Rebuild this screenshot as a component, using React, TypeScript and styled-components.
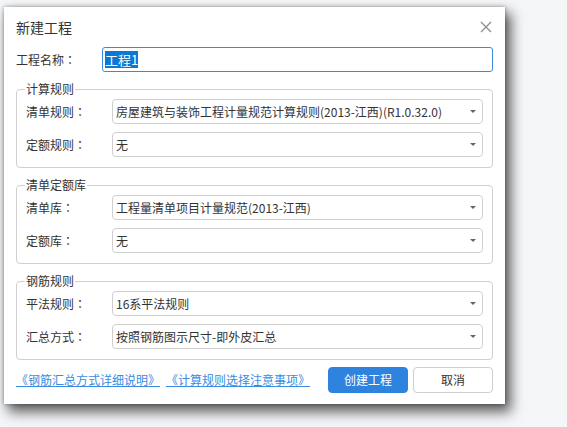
import React from "react";
import styled, { createGlobalStyle } from "styled-components";

const GlobalStyle = createGlobalStyle`
    html, body {
        margin: 0;
        padding: 0;
        background: #f5f6f8;
    }
    body {
        font-family: "Noto Sans CJK SC", "Noto Sans", sans-serif;
        color: #333;
        min-height: 427px;
    }
`;

const Dialog = styled.div`
    box-sizing: border-box;
    width: 501px;
    height: 397px;
    margin: 7px 0 0 4px;
    padding: 0 12px 11px 12px;
    background: #fff;
    box-shadow: 5px 7px 12px 1px rgba(0, 0, 0, 0.62), 0 0 4px rgba(0, 0, 0, 0.35);
    display: flex;
    flex-direction: column;
`;

const Header = styled.div`
    height: 40px;
    display: flex;
    align-items: center;
    justify-content: space-between;
`;

const Title = styled.div`
    font-size: 14px;
    line-height: 18px;
    color: #333;
`;

const CloseButton = styled.button`
    border: 0;
    background: none;
    padding: 0;
    margin-right: 1px;
    width: 12px;
    height: 12px;
    display: flex;
    cursor: pointer;
`;

const Row = styled.div`
    display: grid;
    grid-template-columns: 86px 1fr;
    align-items: center;
`;

const Label = styled.span`
    font-size: 12px;
    line-height: 16px;
    color: #333;
    white-space: nowrap;
`;

// centred full-width colon, as the Windows UI font draws it
const Colon = styled.span`
    font-family: "Noto Sans CJK JP", "Noto Sans CJK SC", sans-serif;
`;

const NameInput = styled.div`
    box-sizing: border-box;
    height: 25px;
    border: 1px solid #3a89e0;
    border-radius: 3px;
    padding-left: 2px;
    display: flex;
    align-items: center;
`;

const Selected = styled.span`
    font-size: 13px;
    line-height: 17px;
    background: #0a78d7;
    color: #fff;
`;

const Group = styled.fieldset`
    margin: 9px 0 0 0;
    padding: 2px 9px 10px 9px;
    border: 1px solid #d0d0d0;
    border-radius: 4px;
    display: flex;
    flex-direction: column;
    gap: 8px;
    min-width: 0;
`;

const Legend = styled.legend`
    font-size: 12px;
    line-height: 16px;
    padding: 0 1px;
    margin-left: -1px;
    color: #333;
`;

const SelectBox = styled.div`
    box-sizing: border-box;
    height: 25px;
    border: 1px solid #cfcfcf;
    border-radius: 4px;
    padding: 0 6px 0 3px;
    display: flex;
    align-items: center;
    justify-content: space-between;
    font-size: 12px;
    line-height: 16px;
    color: #333;
    background: #fff;
`;

const Caret = styled.span`
    width: 0;
    height: 0;
    border-left: 3px solid transparent;
    border-right: 3px solid transparent;
    border-top: 3px solid #666;
`;

const Footer = styled.div`
    margin-top: 7px;
    display: flex;
    align-items: center;
    justify-content: space-between;
`;

const Links = styled.div`
    display: flex;
    gap: 6px;
`;

const Link = styled.a`
    font-size: 12px;
    line-height: 16px;
    color: #3a8be2;
    text-decoration: underline;
    cursor: pointer;
`;

const Buttons = styled.div`
    display: flex;
    gap: 5px;
`;

const Button = styled.button<{ $primary?: boolean }>`
    box-sizing: border-box;
    width: 80px;
    height: 26px;
    border-radius: 4px;
    font-family: inherit;
    font-size: 12px;
    line-height: 16px;
    padding: 0;
    cursor: pointer;
    border: 1px solid ${(p) => (p.$primary ? "#2e83df" : "#cfcfcf")};
    background: ${(p) => (p.$primary ? "#2e83df" : "#fff")};
    color: ${(p) => (p.$primary ? "#fff" : "#333")};
`;

const FieldLabel: React.FC<{ text: string }> = ({ text }) => (
    <Label>
        {text}
        <Colon>：</Colon>
    </Label>
);

const Select: React.FC<{ value: string }> = ({ value }) => (
    <SelectBox>
        <span>{value}</span>
        <Caret />
    </SelectBox>
);

const groups = [
    {
        title: "计算规则",
        rows: [
            ["清单规则", "房屋建筑与装饰工程计量规范计算规则(2013-江西)(R1.0.32.0)"],
            ["定额规则", "无"],
        ],
    },
    {
        title: "清单定额库",
        rows: [
            ["清单库", "工程量清单项目计量规范(2013-江西)"],
            ["定额库", "无"],
        ],
    },
    {
        title: "钢筋规则",
        rows: [
            ["平法规则", "16系平法规则"],
            ["汇总方式", "按照钢筋图示尺寸-即外皮汇总"],
        ],
    },
];

export default function App() {
    return (
        <>
            <GlobalStyle />
            <Dialog>
                <Header>
                    <Title>新建工程</Title>
                    <CloseButton aria-label="关闭">
                        <svg width="12" height="12" viewBox="0 0 12 12">
                            <path d="M1 1L11 11M11 1L1 11" stroke="#8a8a8a" strokeWidth="1.2" fill="none" />
                        </svg>
                    </CloseButton>
                </Header>

                <Row>
                    <FieldLabel text="工程名称" />
                    <NameInput>
                        <Selected>工程1</Selected>
                    </NameInput>
                </Row>

                {groups.map((g) => (
                    <Group key={g.title}>
                        <Legend>{g.title}</Legend>
                        {g.rows.map(([label, value]) => (
                            <Row key={label}>
                                <FieldLabel text={label} />
                                <Select value={value} />
                            </Row>
                        ))}
                    </Group>
                ))}

                <Footer>
                    <Links>
                        <Link>《钢筋汇总方式详细说明》</Link>
                        <Link>《计算规则选择注意事项》</Link>
                    </Links>
                    <Buttons>
                        <Button $primary>创建工程</Button>
                        <Button>取消</Button>
                    </Buttons>
                </Footer>
            </Dialog>
        </>
    );
}
